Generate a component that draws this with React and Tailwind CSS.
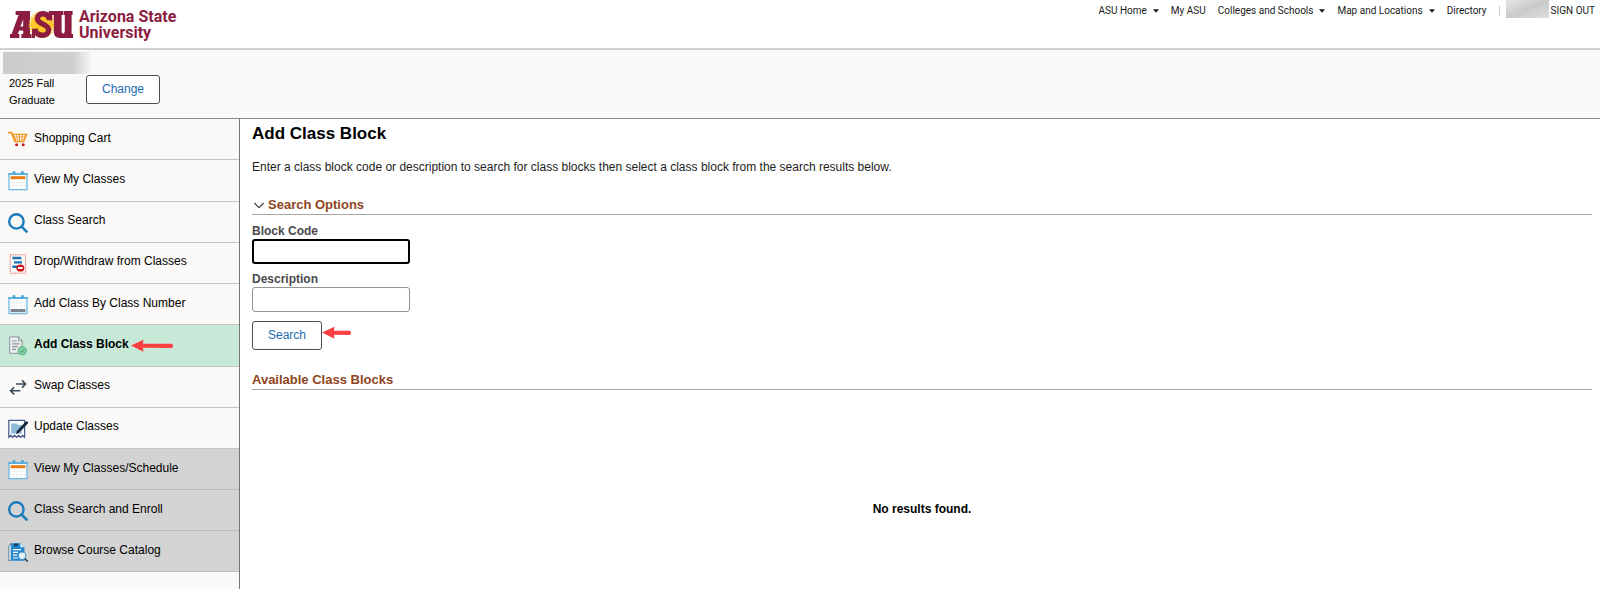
import React, { useState } from "react";

const topLinks = [
  { label: "ASU Home", menu: true },
  { label: "My ASU" },
  { label: "Colleges and Schools", menu: true },
  { label: "Map and Locations", menu: true },
  { label: "Directory" },
];

const CartIcon = () => (
  <svg className="size-5" viewBox="0 0 20 20" fill="none" aria-hidden="true">
    <path d="M0 2.7h3.6l3.3 8.8h9.4" stroke="#ee9420" strokeWidth="1.7" />
    <path d="M4.2 3.8h15.6l-3.4 8H7z" fill="#f09a28" />
    <path
      d="M6.4 5.8h1.8M9.2 5.8H11M12 5.8h1.8M14.8 5.8h2M7.2 8h1.4M9.4 8H11M12 8h1.6M14.6 8H16M8 10h1M9.8 10H11M12 10h1.4M14.4 10h.8"
      stroke="#fff"
      strokeWidth="1.4"
    />
    <circle cx="8.6" cy="14.8" r="1.5" fill="#c0161c" />
    <circle cx="15.2" cy="14.8" r="1.5" fill="#c0161c" />
  </svg>
);

const CalendarIcon = () => (
  <svg className="size-5" viewBox="0 0 20 20" fill="none" aria-hidden="true">
    <path d="M1 2.6h18v16H1z" fill="#fff" stroke="#6db8e4" strokeWidth="1.3" />
    <path d="M.4 2h19.2v2H.4z" fill="#5fb2e0" />
    <path d="M4.6 .2h2.8v3H4.6zM13 .2h2.8v3H13z" fill="#4aa5d8" />
    <path d="M5 9v9M9 9v9M13 9v9M17 9v9M2 11.5h16M2 14.5h16" stroke="#e6ebf0" strokeWidth=".7" />
    <path d="M2.6 5.2h14.8v3H2.6z" fill="#e87b14" />
  </svg>
);

const NumberIcon = () => (
  <svg className="size-5" viewBox="0 0 20 20" fill="none" aria-hidden="true">
    <path d="M1 2.6h18v16H1z" fill="#fff" stroke="#6db8e4" strokeWidth="1.3" />
    <path d="M.4 2h19.2v2H.4z" fill="#5fb2e0" />
    <path d="M4.6 .2h2.8v3H4.6zM13 .2h2.8v3H13z" fill="#4aa5d8" />
    <path d="M5 5v9M9 5v9M13 5v9M17 5v9M2 8h16M2 11h16" stroke="#e6ebf0" strokeWidth=".7" />
    <path d="M2.6 14h14.8v3.2H2.6z" fill="#7d868e" />
  </svg>
);

const SearchIcon = () => (
  <svg className="size-5" viewBox="0 0 20 20" fill="none" aria-hidden="true">
    <circle cx="8.4" cy="8.4" r="7.2" stroke="#1b7bbb" strokeWidth="2.4" />
    <path d="M13.4 13.4l6 6" stroke="#1b7bbb" strokeWidth="2.6" />
  </svg>
);

const DropIcon = () => (
  <svg className="size-5" viewBox="0 0 20 20" fill="none" aria-hidden="true">
    <path d="M2.2 .8h15.4v18.4H2.2z" stroke="#e06b6b" strokeDasharray="1.4 1" />
    <path d="M4.4 4h9M6 8.4h8M4.4 12.8h5" stroke="#1d72b8" strokeWidth="2.4" />
    <ellipse cx="12.4" cy="14" rx="4" ry="3.6" fill="#c9141b" />
    <rect x="10" y="13" width="4.8" height="2" rx=".6" fill="#fff" />
  </svg>
);

const BlockIcon = () => (
  <svg className="size-5" viewBox="0 0 20 20" fill="none" aria-hidden="true">
    <path d="M1.6.9h9.2l3.4 3.6v12.8H1.6z" fill="#ebedee" stroke="#8d9499" />
    <path d="M10.6 1v3.8h3.6" stroke="#8d9499" />
    <path d="M4 5h4.6M4 7.8h7.6M4 10.6h6M4 13.4h4" stroke="#8d9499" strokeWidth="1.2" />
    <circle cx="14.2" cy="14.8" r="4.2" fill="#7fcfa2" stroke="#55ad7c" strokeWidth=".9" />
    <path d="M12.2 14.9l1.5 1.5 2.6-3" stroke="#3d8c5f" strokeWidth=".9" />
  </svg>
);

const SwapIcon = () => (
  <svg className="size-5" viewBox="0 0 20 20" fill="none" stroke="#3c4a5c" strokeWidth="1.6" aria-hidden="true">
    <path d="M8 6h9.6M14 2.4L17.6 6 14 9.6" />
    <path d="M12.4 12.8H2.6M6.2 9.2l-3.6 3.6 3.6 3.6" />
  </svg>
);

const UpdateIcon = () => (
  <svg className="size-5" viewBox="0 0 20 20" fill="none" aria-hidden="true">
    <path
      d="M.8 18.4V1.4h15.8v17l-2-2-2 2-2-2-2 2-2-2-2 2-1.8-2z"
      fill="#f6f8fb"
      stroke="#44598c"
      strokeWidth="1.2"
    />
    <path d="M3.2 4.6h5.6l.8 1.4h4v8.4H3.2z" fill="#8cbbd9" />
    <path d="M18.6 3.8L10.4 12.4" stroke="#17263d" strokeWidth="2.8" strokeLinecap="round" />
    <path d="M8 15l1-3.4 2.4 2.2z" fill="#17263d" />
  </svg>
);

const CatalogIcon = () => (
  <svg className="size-5" viewBox="0 0 20 20" fill="none" aria-hidden="true">
    <path d="M.8 4.4l2.4-3.2V18.4H.8z" fill="#e8f3fa" stroke="#4b7894" strokeWidth=".9" />
    <path d="M3.2 1.2h9.6l3.6 3.6v14H3.2z" fill="#2188d0" />
    <path d="M6.2 1.6h3.4v3.2L7.8 3.6 6.2 4.8z" fill="#16344f" />
    <path d="M12.4 1v4.2h4.2z" fill="#e2f1fb" />
    <path d="M5 7.6h8M5 10.4h5M5 13.2h4M5 16h5" stroke="#fff" strokeWidth="1.2" />
    <circle cx="14" cy="13.8" r="3.8" fill="#e2f3fc" stroke="#3f94cb" strokeWidth="1.1" />
    <path d="M16.8 16.6l3 3" stroke="#263f55" strokeWidth="1.6" />
  </svg>
);

const mainItems = [
  { label: "Shopping Cart", icon: CartIcon },
  { label: "View My Classes", icon: CalendarIcon },
  { label: "Class Search", icon: SearchIcon },
  { label: "Drop/Withdraw from Classes", icon: DropIcon },
  { label: "Add Class By Class Number", icon: NumberIcon },
  { label: "Add Class Block", icon: BlockIcon, active: true },
  { label: "Swap Classes", icon: SwapIcon },
  { label: "Update Classes", icon: UpdateIcon },
];

const otherItems = [
  { label: "View My Classes/Schedule", icon: CalendarIcon },
  { label: "Class Search and Enroll", icon: SearchIcon },
  { label: "Browse Course Catalog", icon: CatalogIcon },
];

// Red pointer that sits over the page next to a control
const Pointer = ({ length, className }) => (
  <svg
    className={className}
    width={length}
    height="14"
    viewBox={`0 0 ${length} 14`}
    fill="#fa4040"
    aria-hidden="true"
  >
    <path d={`M0 6.6L12.4 .8l-.4 4H${length - 2}q2 2 0 4.2L12 8.8l.4 4z`} />
  </svg>
);

const Logo = () => (
  <a href="#" className="flex items-center gap-[5px] text-[#8c1d40]">
    <svg className="h-7 w-16" viewBox="0 0 64 28" aria-hidden="true">
      {/* A */}
      <path
        fill="#8c1d40"
        fillRule="evenodd"
        d="M5.6 0H20v23h1.6v4H11.4v-4h1.8v-3.6H9.2L7.8 23h1.6v4H0v-4h1.6L8.6 4H5.6zM13.2 8.4l-2.8 7h2.8z"
      />
      {/* Sunburst */}
      <circle cx="32" cy="13.6" r="11" fill="#ffc627" />
      <circle
        cx="32"
        cy="13.6"
        r="11.8"
        fill="none"
        stroke="#ffc627"
        strokeWidth="3.2"
        strokeDasharray="1.3 1.13"
      />
      {/* S */}
      <path
        fill="none"
        stroke="#8c1d40"
        strokeWidth="5.4"
        d="M39.6 8.8C38.8 4.8 36.4 2.7 33 2.7c-3.4 0-5.6 1.9-5.6 4.7 0 6.4 11.2 5 11.2 11.6 0 3.2-2.6 5.3-6.2 5.3-4.2 0-6.6-2.2-7.6-6.4"
      />
      <path fill="#8c1d40" d="M38.8 0h3.4v9.4h-3.4zM22 17.8h3V27h-3z" />
      {/* U */}
      <path
        fill="#8c1d40"
        d="M41 0h12v4h-1.4v14.8c0 2.6.4 3.6 1.6 3.6s1.6-1 1.6-3.6V4h-1.2V0h9v4h-1v19H63v4H49.4c-4-.4-5.6-2.8-5.6-7V4H41z"
      />
    </svg>
    <span className="font-['Roboto',sans-serif] text-base leading-4 font-bold">
      Arizona State
      <br />
      University
    </span>
  </a>
);

const NavItem = ({ item, muted }) => {
  const Icon = item.icon;
  return (
    <li
      className={`border-b ${
        item.active
          ? "bg-[#c8e9d8] border-[#c0c4c2] font-bold"
          : muted
          ? "bg-[#d3d3d3] border-[#bdbdbd]"
          : "bg-[#faf9f7] border-[#c4c4c4]"
      }`}
    >
      <a href="#" className="flex h-full items-center gap-1.5 pl-2">
        <span className="pt-0.5">
          <Icon />
        </span>
        <span className="relative pb-[3px]">
          {item.label}
          {item.active && <Pointer length={43} className="absolute top-[3px] left-full ml-0.5" />}
        </span>
      </a>
    </li>
  );
};

const App = () => {
  const [open, setOpen] = useState(true);
  const [code, setCode] = useState("");
  const [description, setDescription] = useState("");

  return (
    <div className="flex min-h-screen flex-col bg-white font-['Liberation_Sans',Arial,sans-serif] text-xs text-black">
      {/* Header */}
      <header className="flex h-[50px] items-start justify-between border-b-2 border-[#d0d0ce] pl-2.5">
        <div className="pt-[9px]">
          <Logo />
        </div>
        <nav className="flex h-[22px] items-center pr-[5px] font-['Roboto',sans-serif] text-[10px] text-[#191919]">
          <ul className="flex items-center gap-3">
            {topLinks.map((link) => (
              <li key={link.label}>
                <a href="#" className="flex items-center gap-1.5">
                  {link.label}
                  {link.menu && (
                    <svg className="h-1 w-1.5" viewBox="0 0 6 4" aria-hidden="true">
                      <path d="M0 .2h6L3 3.8z" fill="#191919" />
                    </svg>
                  )}
                </a>
              </li>
            ))}
          </ul>
          <span className="ml-3 h-2.5 w-px bg-[#c8c8c8]" />
          <span className="ml-1.5 h-[18px] w-[43px] self-start bg-gradient-to-br from-[#e6e6e6] via-[#c9caca] to-[#dedede]" />
          <a href="#" className="ml-0.5">
            SIGN OUT
          </a>
        </nav>
      </header>

      {/* Term bar */}
      <section className="h-[69px] border-b border-[#8a8a8a] bg-[#faf9f7]">
        <div className="flex pl-[3px] pt-[2px]">
          <div className="w-[83px]">
            <div className="h-[22px] w-[87px] bg-gradient-to-r from-[#cccccc] via-[#cfcfcf] via-80% to-[#f4f3f2]" />
            <p className="pt-px pl-1.5 text-[11px] leading-[17px]">
              2025 Fall
              <br />
              Graduate
            </p>
          </div>
          <button className="mt-[23px] h-[29px] w-[74px] rounded-[3px] border border-[#4d4d4d] bg-white pb-0.5 text-[#1b6cb0]">
            Change
          </button>
        </div>
      </section>

      <div className="flex flex-1">
        {/* Sidebar */}
        <aside className="w-60 shrink-0 border-r border-[#757575] bg-[#faf9f7]">
          <ul className="grid h-[330px] auto-rows-fr">
            {mainItems.map((item) => (
              <NavItem key={item.label} item={item} />
            ))}
          </ul>
          <ul className="grid h-[123px] auto-rows-fr">
            {otherItems.map((item) => (
              <NavItem key={item.label} item={item} muted />
            ))}
          </ul>
        </aside>

        {/* Content */}
        <main className="flex flex-1 flex-col pl-3 pr-2">
          <h1 className="pt-1 text-[17px] leading-[22px] font-bold">Add Class Block</h1>
          <p className="mt-3 leading-5 text-[#222222]">
            Enter a class block code or description to search for class blocks then select a class block from
            the search results below.
          </p>

          <h2 className="mt-[19px] border-b border-[#a6a6a6] text-[13px] leading-[18px] font-bold text-[#8e4520]">
            <button onClick={() => setOpen(!open)} className="flex items-center gap-0.5">
              <svg className="h-3.5 w-3.5" viewBox="0 0 14 14" fill="none" aria-hidden="true">
                <path d="M2.4 5l4.6 4.6L11.6 5" stroke="#444" strokeWidth="1.2" />
              </svg>
              Search Options
            </button>
          </h2>

          {open && (
            <form onSubmit={(e) => e.preventDefault()} className="flex flex-col items-start pt-[9px]">
              <label htmlFor="code" className="leading-[15px] font-bold text-[#4a4a4a]">
                Block Code
              </label>
              <input
                id="code"
                autoFocus
                value={code}
                onChange={(e) => setCode(e.target.value)}
                className="h-[25px] w-[158px] rounded-[3px] border-2 border-black bg-white px-0.5 outline-none"
              />
              <label htmlFor="description" className="mt-2 leading-[15px] font-bold text-[#4a4a4a]">
                Description
              </label>
              <input
                id="description"
                value={description}
                onChange={(e) => setDescription(e.target.value)}
                className="h-[25px] w-[158px] rounded-[3px] border border-[#949494] bg-white px-1 outline-none"
              />
              <div className="relative mt-[9px]">
                <button className="h-[29px] w-[70px] rounded-[3px] border border-[#4d4d4d] bg-white pb-0.5 text-[#1b6cb0]">
                  Search
                </button>
                <Pointer length={30} className="absolute top-[5px] left-full" />
              </div>
            </form>
          )}

          <h2 className="mt-[21px] border-b border-[#a6a6a6] text-[13px] leading-[18px] font-bold text-[#8e4520]">
            Available Class Blocks
          </h2>
          <p className="pt-[111px] text-center font-bold">No results found.</p>
        </main>
      </div>
    </div>
  );
};

export default App;
